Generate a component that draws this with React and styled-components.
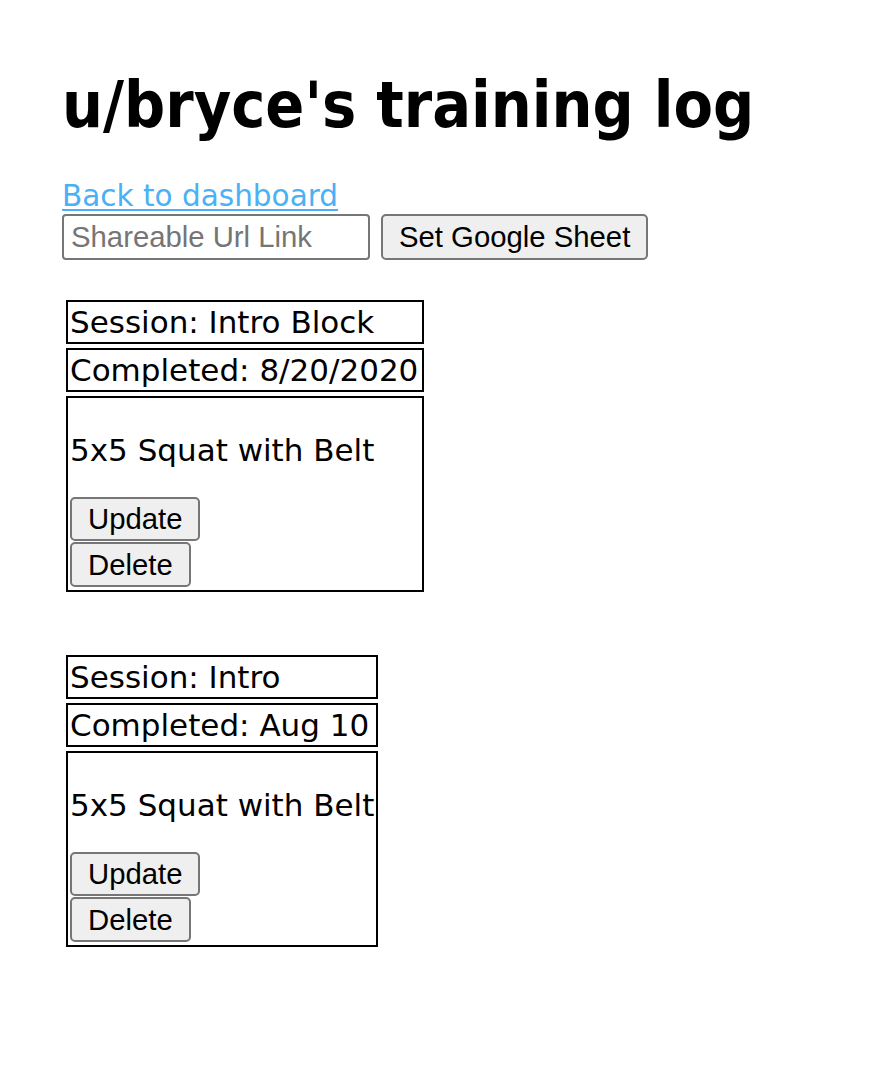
import React from "react";
import styled, { createGlobalStyle } from "styled-components";

const Global = createGlobalStyle`
  html, body { margin: 0; padding: 0; background: #fff; }
  body {
    font-family: "DejaVu Sans", Verdana, sans-serif;
    font-size: 31px;
    color: #000;
  }
`;

const Page = styled.main`
  padding: 68px 0 40px 62px;
`;

const Title = styled.h1`
  font-family: "DejaVu Sans Condensed", "DejaVu Sans", Verdana, sans-serif;
  font-stretch: condensed;
  font-size: 64px;
  font-weight: bold;
  line-height: 74px;
  margin: 0 0 37px;
`;

const BackLink = styled.a`
  display: block;
  font-size: 29.5px;
  line-height: 35px;
  color: #4ab1f4;
  text-decoration: underline;
  text-decoration-thickness: 2px;
  text-underline-offset: 3px;
`;

const Controls = styled.div`
  display: flex;
  align-items: center;
  gap: 11px;
  margin-top: 0;
`;

const UrlInput = styled.input`
  box-sizing: border-box;
  width: 308px;
  height: 46px;
  padding: 0 7px;
  font-family: "Liberation Sans", Arial, sans-serif;
  font-size: 29.3px;
  border: 2px solid #767676;
  border-radius: 4px;
  color: #000;
  &::placeholder { color: #757575; }
`;

const Button = styled.button`
  box-sizing: border-box;
  height: ${(p) => p.$h || 45}px;
  padding: 0 16px;
  font-family: "Liberation Sans", Arial, sans-serif;
  font-size: 29.3px;
  color: #000;
  background: #efefef;
  border: 2px solid #767676;
  border-radius: 5px;
  margin: 0;
`;

const Sessions = styled.div`
  display: flex;
  flex-direction: column;
  align-items: flex-start;
  gap: 63px;
  margin-top: 40px;
  margin-left: 4px;
`;

const Session = styled.section`
  display: flex;
  flex-direction: column;
  gap: 4px;
`;

const Field = styled.div`
  border: 2px solid #000;
  padding: 0 4px 0 2px;
  line-height: 40px;
  white-space: nowrap;
`;

const Card = styled.div`
  border: 2px solid #000;
  padding: 0 2px 3px;
  display: flex;
  flex-direction: column;
  align-items: flex-start;
`;

const Exercise = styled.p`
  margin: 32px 0 27px;
  line-height: 40px;
  white-space: nowrap;
`;

const ButtonStack = styled.div`
  display: flex;
  flex-direction: column;
  align-items: flex-start;
  gap: 1px;
`;

const sessions = [
  { name: "Intro Block", completed: "8/20/2020", exercise: "5x5 Squat with Belt" },
  { name: "Intro", completed: "Aug 10", exercise: "5x5 Squat with Belt" },
];

export default function App() {
  return (
    <>
      <Global />
      <Page>
        <Title>u/bryce's training log</Title>
        <BackLink href="#">Back to dashboard</BackLink>
        <Controls>
          <UrlInput placeholder="Shareable Url Link" />
          <Button $h={46}>Set Google Sheet</Button>
        </Controls>
        <Sessions>
          {sessions.map((s) => (
            <Session key={s.name}>
              <Field>Session: {s.name}</Field>
              <Field>Completed: {s.completed}</Field>
              <Card>
                <Exercise>{s.exercise}</Exercise>
                <ButtonStack>
                  <Button $h={44}>Update</Button>
                  <Button $h={45}>Delete</Button>
                </ButtonStack>
              </Card>
            </Session>
          ))}
        </Sessions>
      </Page>
    </>
  );
}
